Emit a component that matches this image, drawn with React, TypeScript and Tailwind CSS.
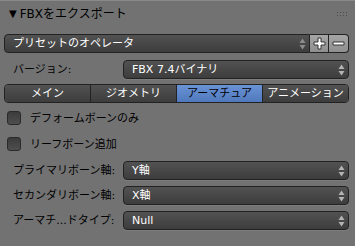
import React from "react";

const font = "font-['DejaVu_Sans','Noto_Sans_CJK_JP',sans-serif]";

function UpDown({ dim }: { dim?: boolean }) {
  const c = dim ? "#8c8c8c" : "#b4b4b4";
  return (
    <svg width="7" height="12" viewBox="0 0 7 12">
      <path d="M3.5 0.5 L6.5 5 L0.5 5 Z" fill={c} />
      <path d="M0.5 7 L6.5 7 L3.5 11.5 Z" fill={c} />
    </svg>
  );
}

function Select({ text }: { text: string }) {
  return (
    <div className="flex h-[19px] flex-1 items-center justify-between rounded-[4px] border border-[#222] bg-linear-to-b from-[#525252] to-[#3d3d3d] pl-[8px] pr-[3px] text-white shadow-[0_1px_0_rgba(255,255,255,0.08)]">
      <span>{text}</span>
      <UpDown />
    </div>
  );
}

function Row({ label, value }: { label: string; value: string }) {
  return (
    <div className="flex h-[19px] items-center">
      <span className="w-[119px] pl-[9px] text-black">{label}</span>
      <Select text={value} />
    </div>
  );
}

function Check({ label }: { label: string }) {
  return (
    <div className="flex h-[14px] items-center gap-[9px] pl-[3px]">
      <div className="h-[14px] w-[14px] rounded-[3px] border border-[#2a2a2a] bg-linear-to-b from-[#3c3c3c] to-[#4e4e4e]" />
      <span className="text-black">{label}</span>
    </div>
  );
}

const tabs = ["メイン", "ジオメトリ", "アーマチュア", "アニメーション"];

function PlusMinus({ minus }: { minus?: boolean }) {
  return (
    <svg width="13" height="13" viewBox="0 0 13 13">
      {minus ? (
        <path d="M1 5 H12 V8 H1 Z" fill="#fff" stroke="#333" strokeWidth="1" />
      ) : (
        <path
          d="M5 1 H8 V5 H12 V8 H8 V12 H5 V8 H1 V5 H5 Z"
          fill="#fff"
          stroke="#333"
          strokeWidth="1"
        />
      )}
    </svg>
  );
}

export default function App() {
  return (
    <div
      className={`flex h-[246px] w-[355px] flex-col overflow-hidden border-t border-[#8a8a8a] bg-[#727272] pl-[4px] pr-[6px] text-[11px] leading-none ${font}`}
    >
      {/* header */}
      <div className="flex h-[25px] items-center justify-between pl-[5px] pr-[2px]">
        <div className="flex items-center gap-[3px] text-[12px] text-black">
          <span className="text-[10px]">▼</span>
          <span>FBXをエクスポート</span>
        </div>
        <div className="grid grid-cols-4 gap-x-[2px] gap-y-[2px]">
          {Array.from({ length: 8 }).map((_, i) => (
            <div key={i} className="h-[1px] w-[1px] bg-[#4a4a4a]" />
          ))}
        </div>
      </div>

      {/* preset */}
      <div className="mt-[8px] flex h-[19px]">
        <div className="flex flex-1 items-center justify-between rounded-l-[4px] border border-[#222] bg-linear-to-b from-[#525252] to-[#3d3d3d] pl-[8px] pr-[3px] text-white">
          <span>プリセットのオペレータ</span>
          <UpDown dim />
        </div>
        <div className="flex w-[19px] items-center justify-center border-y border-r border-[#222] bg-linear-to-b from-[#a5a5a5] to-[#8f8f8f]">
          <PlusMinus />
        </div>
        <div className="flex w-[20px] items-center justify-center rounded-r-[4px] border-y border-r border-[#222] bg-linear-to-b from-[#a5a5a5] to-[#8f8f8f]">
          <PlusMinus minus />
        </div>
      </div>

      {/* version */}
      <div className="mt-[7px]">
        <Row label="バージョン:" value="FBX 7.4バイナリ" />
      </div>

      {/* tabs */}
      <div className="mt-[5px] flex h-[19px] rounded-[4px] border border-[#222]">
        {tabs.map((t, i) => (
          <div
            key={t}
            className={`flex flex-1 items-center justify-center ${
              i > 0 ? "border-l border-[#222]" : ""
            } ${i === 0 ? "rounded-l-[3px]" : ""} ${
              i === 3 ? "rounded-r-[3px]" : ""
            } ${
              i === 2
                ? "bg-linear-to-b from-[#6a93d6] to-[#5079bd] text-black"
                : "bg-linear-to-b from-[#525252] to-[#3d3d3d] text-white"
            }`}
          >
            {t}
          </div>
        ))}
      </div>

      {/* checkboxes */}
      <div className="mt-[8px] flex flex-col gap-[12px]">
        <Check label="デフォームボーンのみ" />
        <Check label="リーフボーン追加" />
      </div>

      {/* axes */}
      <div className="mt-[10px] flex flex-col gap-[6px]">
        <Row label="プライマリボーン軸:" value="Y軸" />
        <Row label="セカンダリボーン軸:" value="X軸" />
        <Row label="アーマチ...ドタイプ:" value="Null" />
      </div>
    </div>
  );
}
